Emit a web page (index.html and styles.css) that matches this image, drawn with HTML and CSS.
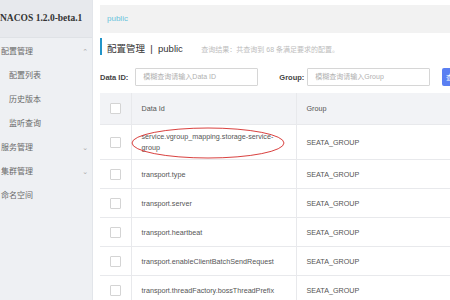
FILE: index.html
```html
<!DOCTYPE html>
<html lang="zh-CN">
<head>
    <meta charset="UTF-8">
    <title>Nacos 配置列表</title>
    <link rel="stylesheet" href="styles.css">
</head>
<body>
    <div class="sidebar">
        <div class="logo">NACOS 1.2.0-beta.1</div>
        <ul class="menu">
            <li class="menu-top">配置管理 <span class="arrow">&#8963;</span></li>
            <li class="menu-sub">配置列表</li>
            <li class="menu-sub">历史版本</li>
            <li class="menu-sub">监听查询</li>
            <li class="menu-top">服务管理 <span class="arrow">&#8964;</span></li>
            <li class="menu-top">集群管理 <span class="arrow">&#8964;</span></li>
            <li class="menu-top">命名空间</li>
        </ul>
    </div>

    <div class="main">
        <div class="crumb">public</div>

        <div class="title">
            <span class="title-text">配置管理 &nbsp;|&nbsp; public</span>
            <span class="title-info">查询结果：共查询到 68 条满足要求的配置。</span>
        </div>

        <div class="search">
            <label>Data ID:</label>
            <div class="input input-id">模糊查询请输入Data ID</div>
            <label class="label-group">Group:</label>
            <div class="input input-group">模糊查询请输入Group</div>
            <button class="btn">查询</button>
        </div>

        <div class="table-wrap">
            <table class="table">
                <thead>
                    <tr>
                        <th class="col-check"><span class="checkbox"></span></th>
                        <th class="col-id">Data Id</th>
                        <th>Group</th>
                    </tr>
                </thead>
                <tbody>
                    <tr class="row-tall">
                        <td class="col-check"><span class="checkbox"></span></td>
                        <td>service.vgroup_mapping.storage-service-<br>group</td>
                        <td>SEATA_GROUP</td>
                    </tr>
                    <tr>
                        <td class="col-check"><span class="checkbox"></span></td>
                        <td>transport.type</td>
                        <td>SEATA_GROUP</td>
                    </tr>
                    <tr>
                        <td class="col-check"><span class="checkbox"></span></td>
                        <td>transport.server</td>
                        <td>SEATA_GROUP</td>
                    </tr>
                    <tr>
                        <td class="col-check"><span class="checkbox"></span></td>
                        <td>transport.heartbeat</td>
                        <td>SEATA_GROUP</td>
                    </tr>
                    <tr>
                        <td class="col-check"><span class="checkbox"></span></td>
                        <td>transport.enableClientBatchSendRequest</td>
                        <td>SEATA_GROUP</td>
                    </tr>
                    <tr>
                        <td class="col-check"><span class="checkbox"></span></td>
                        <td>transport.threadFactory.bossThreadPrefix</td>
                        <td>SEATA_GROUP</td>
                    </tr>
                </tbody>
            </table>

            <!-- 标注圈 -->
            <svg class="mark" width="160" height="36" viewBox="0 0 160 36">
                <ellipse cx="78" cy="18" rx="76" ry="15" fill="none" stroke="#d9413f" stroke-width="1"/>
            </svg>
        </div>
    </div>
</body>
</html>
```

FILE: styles.css
```css
body {
    margin: 0;
    padding: 0;
    width: 450px;
    height: 300px;
    overflow: hidden;
    display: flex;
    background: #fff;
    font-family: "Liberation Sans", "Noto Sans CJK SC", sans-serif;
    color: #333;
}
.sidebar {
    width: 92px;
    flex: none;
    height: 300px;
    background: #eef0f3;
    border-right: 1px solid #e2e5ea;
    overflow: hidden;
}
.logo {
    height: 37px;
    line-height: 36px;
    background: #e7e9ed;
    border-bottom: 1px solid #dfe2e6;
    font-family: "Liberation Serif", serif;
    font-size: 9.5px;
    font-weight: bold;
    color: #333;
    white-space: nowrap;
}
.menu {
    list-style: none;
    margin: 2px 0 0 0;
    padding: 0;
}
.menu li {
    position: relative;
    height: 24px;
    line-height: 24px;
    font-size: 8px;
    color: #6a6a6a;
    white-space: nowrap;
}
.menu-top {
    padding-left: 1px;
}
.menu-sub {
    padding-left: 9px;
}
.arrow {
    position: absolute;
    right: 4px;
    top: 0;
    color: #aaa;
    font-family: "DejaVu Sans", sans-serif;
    font-size: 7px;
}
.main {
    margin-left: 7px;
    width: 400px;
    flex: none;
    padding-top: 5px;
}
.crumb {
    height: 28px;
    line-height: 28px;
    background: #f2f2f2;
    padding-left: 7px;
    font-size: 8px;
    color: #68c4dc;
}
.title {
    margin-top: 5px;
    height: 17px;
    line-height: 17px;
    border-left: 2px solid #2294c8;
    padding-left: 5px;
    white-space: nowrap;
}
.title-text {
    font-size: 9.5px;
    color: #333;
}
.title-info {
    margin-left: 14px;
    font-size: 7px;
    color: #bdbdbd;
}
.search {
    margin-top: 13px;
    height: 18px;
    display: flex;
    align-items: center;
    white-space: nowrap;
}
.search label {
    font-size: 7.5px;
    font-weight: bold;
    color: #444;
}
.input {
    height: 16px;
    line-height: 16px;
    border: 1px solid #d6d6d6;
    border-radius: 1px;
    padding-left: 7px;
    font-size: 7px;
    color: #b0b0b0;
    box-sizing: content-box;
}
.input-id {
    margin-left: 7px;
    width: 114px;
}
.label-group {
    margin-left: 21px;
}
.input-group {
    margin-left: 3px;
    width: 114px;
}
.btn {
    margin-left: 12px;
    width: 34px;
    height: 18px;
    border: none;
    border-radius: 2px;
    background: #5a7ff2;
    color: #fff;
    font-size: 7px;
    padding: 0;
    text-align: left;
    padding-left: 4px;
}
.table-wrap {
    position: relative;
    margin-top: 7px;
}
.table {
    width: 400px;
    border-collapse: collapse;
    font-size: 7.2px;
    color: #555;
}
.table th {
    background: #f2f3f6;
    height: 31px;
    text-align: left;
    font-weight: normal;
    padding: 0 0 0 10px;
    border: 1px solid #e8e9ec;
    border-top: none;
}
.table td {
    height: 28px;
    padding: 0 0 0 10px;
    border: 1px solid #e8e9ec;
    line-height: 11px;
}
.table .row-tall td {
    height: 34px;
}
.table .col-check {
    width: 31px;
    padding: 0;
    text-align: center;
    box-sizing: border-box;
}
.table .col-id {
    width: 165px;
    box-sizing: border-box;
}
.table tr > :first-child {
    border-left: none;
}
.checkbox {
    display: inline-block;
    width: 9px;
    height: 9px;
    border: 1px solid #d4d4d4;
    background: #fff;
    border-radius: 1px;
    vertical-align: middle;
}
.mark {
    position: absolute;
    left: 30px;
    top: 32px;
}
```
